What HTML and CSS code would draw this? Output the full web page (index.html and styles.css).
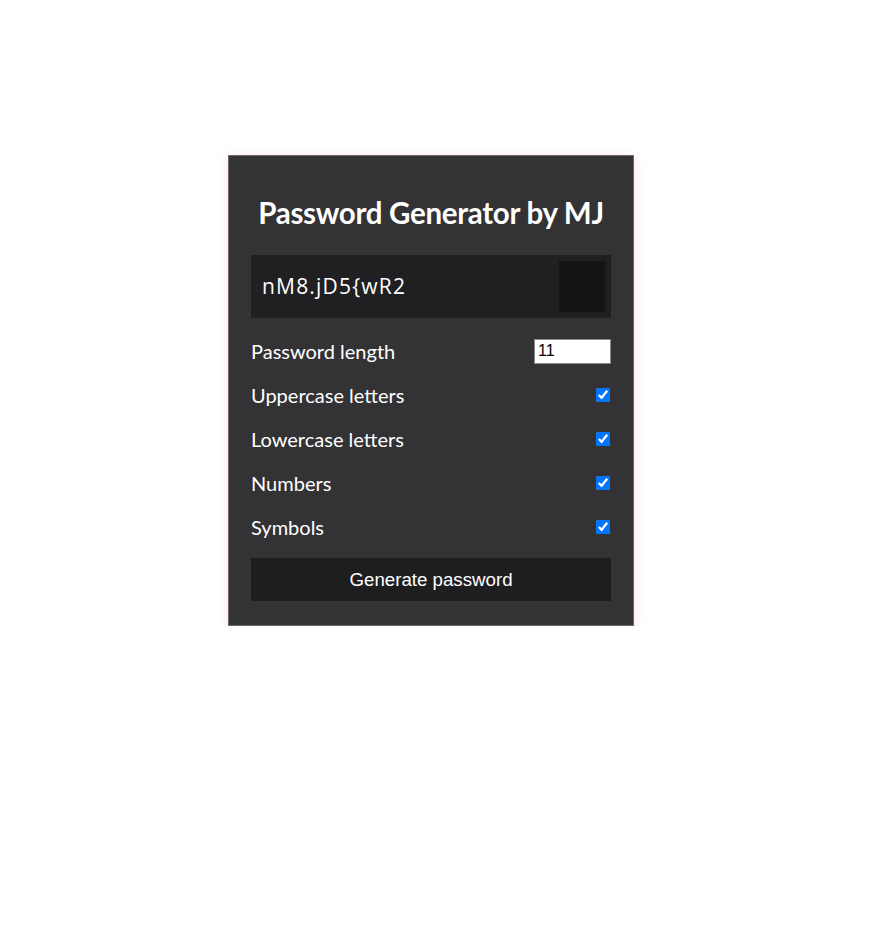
FILE: index.html
```html
<!DOCTYPE html>
<html lang="en">
<head>
<meta charset="utf-8">
<title>Password Generator</title>
<link rel="stylesheet" href="styles.css">
</head>
<body>
<div class="card">
  <h2 class="title">Password Generator by MJ</h2>
  <div class="result">
    <span class="result-text">nM8.jD5{wR2</span>
    <button class="clip" aria-label="Copy"></button>
  </div>
  <div class="setting">
    <label>Password length</label>
    <input class="len" type="number" value="11">
  </div>
  <div class="setting">
    <label>Uppercase letters</label>
    <input type="checkbox" checked>
  </div>
  <div class="setting">
    <label>Lowercase letters</label>
    <input type="checkbox" checked>
  </div>
  <div class="setting">
    <label>Numbers</label>
    <input type="checkbox" checked>
  </div>
  <div class="setting">
    <label>Symbols</label>
    <input type="checkbox" checked>
  </div>
  <button class="generate">Generate password</button>
</div>
</body>
</html>
```
FILE: styles.css
```css
* { box-sizing: border-box; }
body {
  margin: 0;
  background: #fff;
  font-family: "Lato", "Open Sans", sans-serif;
  color: #fff;
}
.card {
  margin: 155px 0 0 228px;
  width: 406px;
  height: 471px;
  background: #333235;
  border: 1px solid #6a6a6c;
  box-shadow: 0 2px 10px rgba(255, 120, 120, 0.22);
  padding: 23px 22px 0 22px;
}
.title {
  margin: 18px 0 26px;
  text-align: center;
  font-size: 29.5px;
  font-weight: 700;
  line-height: 32px;
  letter-spacing: -0.3px;
}
.result {
  height: 63px;
  background: #202023;
  display: flex;
  align-items: flex-start;
  justify-content: space-between;
  padding: 6px 6px 0 11px;
}
.result-text {
  font-family: "Open Sans", sans-serif;
  font-size: 21px;
  line-height: 51px;
  letter-spacing: 1.2px;
}
.clip {
  width: 46px;
  height: 51px;
  background: #141414;
  border: none;
  padding: 0;
}
.setting {
  display: flex;
  justify-content: space-between;
  align-items: center;
  height: 44px;
  font-size: 20px;
}
.result + .setting { margin-top: 11px; }
.len {
  width: 77px;
  height: 25px;
  font-family: "Liberation Sans", Arial, sans-serif;
  font-size: 16px;
  color: #000;
  padding: 1px 3px;
  border: 1px solid #8a8a8a;
  margin: 0;
}
input[type="checkbox"] {
  width: 14px;
  height: 14px;
  margin: 0 1px 0 0;
  accent-color: #0075ff;
}
.generate {
  display: block;
  width: 100%;
  height: 43px;
  margin-top: 9px;
  background: #1e1e20;
  color: #fff;
  border: none;
  font-family: "Liberation Sans", Arial, sans-serif;
  font-size: 18.7px;
}
```
